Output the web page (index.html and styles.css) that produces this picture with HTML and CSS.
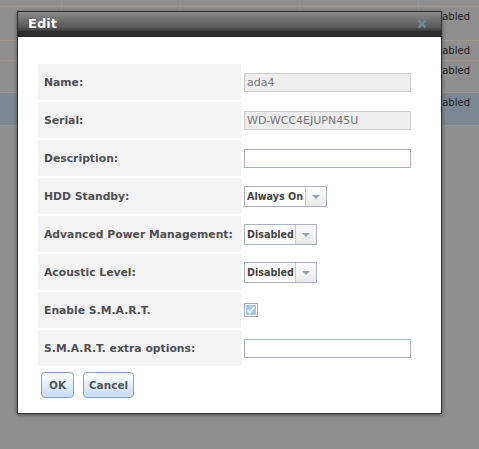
FILE: index.html
```html
<!DOCTYPE html>
<html lang="en">
<head>
    <meta charset="UTF-8">
    <meta name="viewport" content="width=device-width, initial-scale=1.0">
    <title>Edit disk</title>
    <link rel="stylesheet" href="styles.css">
</head>
<body>
    <!-- disk list behind the dialog -->
    <div class="list">
        <div class="row r0"><div class="cell"></div><div class="cell"></div><div class="cell"></div><div class="cell"></div><div class="cell"></div></div>
        <div class="row r1"><div class="cell"></div><div class="cell"></div><div class="cell"></div><div class="cell"></div><div class="cell">Disabled</div></div>
        <div class="row r2"><div class="cell"></div><div class="cell"></div><div class="cell"></div><div class="cell"></div><div class="cell">Disabled</div></div>
        <div class="row r3"><div class="cell"></div><div class="cell"></div><div class="cell"></div><div class="cell"></div><div class="cell">Disabled</div></div>
        <div class="row r4 selected"><div class="cell"></div><div class="cell"></div><div class="cell"></div><div class="cell"></div><div class="cell">Disabled</div></div>
    </div>

    <div class="dialog">
        <div class="titlebar">
            <span class="title">Edit</span>
            <span class="close">
                <svg width="10" height="10" viewBox="0 0 10 10"><path d="M1.5 1.5 L8.5 8.5 M8.5 1.5 L1.5 8.5" stroke="#74849a" stroke-width="2.4" fill="none"/></svg>
            </span>
        </div>
        <form class="content" onsubmit="return false;">
            <table class="fields">
                <tr>
                    <th>Name:</th>
                    <td><input type="text" class="text readonly" value="ada4" readonly></td>
                </tr>
                <tr>
                    <th>Serial:</th>
                    <td><input type="text" class="text readonly" value="WD-WCC4EJUPN45U" readonly></td>
                </tr>
                <tr>
                    <th>Description:</th>
                    <td><input type="text" class="text" value=""></td>
                </tr>
                <tr>
                    <th>HDD Standby:</th>
                    <td><span class="select"><span class="value standby">Always On</span><span class="arrow"></span></span></td>
                </tr>
                <tr>
                    <th>Advanced Power Management:</th>
                    <td><span class="select"><span class="value short">Disabled</span><span class="arrow"></span></span></td>
                </tr>
                <tr>
                    <th>Acoustic Level:</th>
                    <td><span class="select"><span class="value short">Disabled</span><span class="arrow"></span></span></td>
                </tr>
                <tr>
                    <th>Enable S.M.A.R.T.</th>
                    <td>
                        <span class="check">
                            <svg width="14" height="14" viewBox="0 0 14 14">
                                <rect x="0.5" y="0.5" width="13" height="13" fill="#fff" stroke="#a3abb8"/>
                                <rect x="2" y="2" width="10" height="10" fill="#a4c6e8"/>
                                <path d="M3.6 7.2 L5.8 9.6 L10.4 3.8" stroke="#fff" stroke-width="1.8" fill="none"/>
                            </svg>
                        </span>
                    </td>
                </tr>
                <tr>
                    <th>S.M.A.R.T. extra options:</th>
                    <td><input type="text" class="text" value=""></td>
                </tr>
            </table>
            <div class="actions">
                <button type="submit" class="btn ok">OK</button>
                <button type="button" class="btn cancel">Cancel</button>
            </div>
        </form>
    </div>
</body>
</html>
```

FILE: styles.css
```css
body {
    margin: 0;
    height: 449px;
    overflow: hidden;
    background: #8e8e8e;
    font-family: "DejaVu Sans", Verdana, sans-serif;
}
.list {
    width: 100%;
}
.row {
    display: grid;
    grid-template-columns: 62px 119px 119px 119px 1fr;
    box-sizing: border-box;
    border-bottom: 1px solid #9e948e;
}
.cell {
    border-right: 1px solid #9e948e;
    padding: 3px 0 0 8px;
    font-size: 10px;
    line-height: 14px;
    color: #1e1e1e;
    white-space: nowrap;
    overflow: hidden;
}
.cell:last-child {
    border-right: 0;
    padding: 3px 9px 0 0;
    text-align: right;
}
.r0 { height: 7px; }
.r1 { height: 34px; }
.r2 { height: 20px; }
.r3 { height: 32px; }
.r4 { height: 33px; }
.selected {
    background: #7b8893;
}

/* modal */
.dialog {
    position: absolute;
    left: 17px;
    top: 11px;
    width: 425px;
    height: 403px;
    box-sizing: border-box;
    border: 1px solid #303030;
    background: white;
    box-shadow: 0 1px 4px rgba(0, 0, 0, 0.45);
}
.titlebar {
    height: 25px;
    display: flex;
    align-items: center;
    justify-content: space-between;
    padding: 0 14px 2px 10px;
    box-sizing: border-box;
    background: linear-gradient(#8a8a8a, #5a5a5a 60%, #3a3a3a 76%, #2d2d2d 77%, #2b2b2b);
}
.title {
    color: white;
    font-weight: bold;
    font-size: 13px;
    text-shadow: 0 0 1px rgba(0, 0, 0, 0.4);
}
.close {
    display: flex;
}
.content {
    padding: 25px 0 0 18px;
    margin: 0;
}
.fields {
    border-spacing: 2px;
}
.fields th {
    width: 203px;
    height: 36px;
    box-sizing: border-box;
    padding: 0 0 0 6px;
    text-align: left;
    vertical-align: middle;
    background: #f3f3f3;
    color: #4f4f55;
    font-size: 10.8px;
    font-weight: bold;
    white-space: nowrap;
}
.fields td {
    padding: 0 0 0 1px;
    vertical-align: middle;
    width: 170px;
}
.text {
    display: block;
    width: 167px;
    height: 19px;
    box-sizing: border-box;
    margin: 0;
    padding: 0 2px;
    border: 1px solid #a9b3c7;
    background: white;
    font-family: "DejaVu Sans", Verdana, sans-serif;
    font-size: 11px;
    color: #777;
    outline: none;
}
.readonly {
    border-color: #cdcdcd;
    background: #ededed;
}
.select {
    display: inline-flex;
    height: 21px;
    box-sizing: border-box;
    border: 1px solid #aab3c6;
    background: white;
    vertical-align: middle;
}
.value {
    box-sizing: border-box;
    padding: 0 0 0 2px;
    border-right: 1px solid #c3c9d4;
    font-size: 9.6px;
    font-weight: bold;
    line-height: 19px;
    color: #444;
    white-space: nowrap;
    overflow: hidden;
}
.standby { width: 61px; }
.short { width: 51px; }
.arrow {
    width: 20px;
    position: relative;
    background: linear-gradient(#fdfdfd, #e9e9e9);
}
.arrow::after {
    content: "";
    position: absolute;
    left: 6px;
    top: 8px;
    border-left: 4px solid transparent;
    border-right: 4px solid transparent;
    border-top: 4px solid #8fa3bc;
}
.check {
    display: flex;
}
.actions {
    display: flex;
    gap: 9px;
    padding: 4px 0 0 5px;
}
.btn {
    height: 26px;
    box-sizing: border-box;
    border: 1px solid #86a5c8;
    border-radius: 4px;
    background: linear-gradient(#ffffff, #e2eefa 50%, #c6dcf3);
    color: #555;
    font-family: "DejaVu Sans", Verdana, sans-serif;
    font-size: 10.5px;
    font-weight: bold;
    padding: 0;
    cursor: pointer;
}
.ok { width: 33px; }
.cancel { width: 51px; }
```
